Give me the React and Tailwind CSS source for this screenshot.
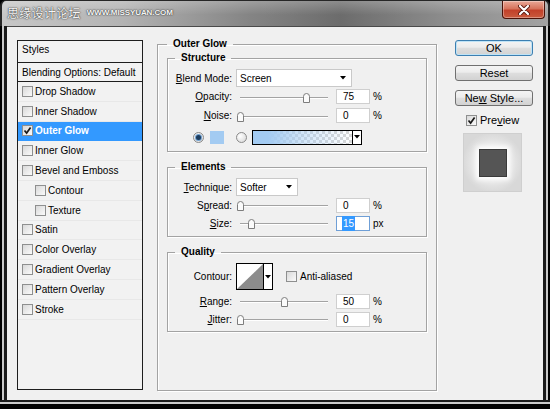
import React from 'react';

const U = ({ children }) => <span className="underline underline-offset-[1px]">{children}</span>;

function Checkbox({ checked }) {
  return (
    <span className="w-[11px] h-[11px] shrink-0 border border-[#8e8f8f] bg-[linear-gradient(135deg,#d9d9d9,#fafafa)] flex items-center justify-center">
      {checked && (
        <svg width="9" height="9" viewBox="0 0 9 9">
          <path d="M1.5 4.5 L3.6 7 L7.6 1.4" fill="none" stroke="#1a1a1a" strokeWidth="1.7" />
        </svg>
      )}
    </span>
  );
}

function Radio({ checked }) {
  return (
    <span className="w-[11px] h-[11px] shrink-0 rounded-full border border-[#8a8a8a] bg-[radial-gradient(circle_at_35%_35%,#ffffff,#d4d4d4)] flex items-center justify-center">
      {checked && <span className="w-[5px] h-[5px] rounded-full bg-[#1c3c5e] shadow-[0_0_0_1px_#6f9fcf]" />}
    </span>
  );
}

function Arrow() {
  return (
    <svg width="6" height="4" viewBox="0 0 6 4">
      <path d="M0 0 H6 L3 3.5 Z" fill="#000" />
    </svg>
  );
}

function Dropdown({ text, className }) {
  return (
    <div className={'ml-[4px] h-[18px] border border-[#c9c9c9] bg-white flex items-center justify-between pl-[3px] pr-[5px] ' + className}>
      <span>{text}</span>
      <Arrow />
    </div>
  );
}

function Label({ children }) {
  return <span className="w-[57px] shrink-0 text-right">{children}</span>;
}

function Slider({ p }) {
  const left = 4 + p * 88 - 3.5;
  return (
    <div className="relative ml-[4px] w-[96px] h-full shrink-0">
      <div className="absolute left-[4px] right-[4px] top-1/2 h-[2px] border-t border-[#a3a3a3] border-b border-b-white" />
      <svg className="absolute top-[calc(50%-4px)]" style={{ left }} width="7" height="10" viewBox="0 0 7 10">
        <path d="M0.5 3.5 A3 3 0 0 1 6.5 3.5 V9.5 H0.5 Z" fill="#fbfbfb" stroke="#7d7d7d" />
      </svg>
    </div>
  );
}

function SliderRow({ label, p, value, unit, selected, className }) {
  return (
    <div className={'flex items-center ' + className}>
      <Label>{label}</Label>
      <Slider p={p} />
      <div
        className={
          'ml-[4px] w-[34px] h-[15px] bg-white flex items-center pl-[5px] border ' +
          (selected ? 'border-[#6f9fd6]' : 'border-[#cfcfcf]')
        }
      >
        {selected ? <span className="bg-[#3399ff] text-white px-[1px]">{value}</span> : <span className="pl-[1px]">{value}</span>}
      </div>
      <span className="ml-[3px]">{unit}</span>
    </div>
  );
}

function Group({ title, className, children }) {
  return (
    <fieldset className={'border border-[#a3a3a3] shadow-[inset_1px_1px_0_#fff,1px_1px_0_#fff] px-[7px] ' + className}>
      <legend className="px-[6px] font-bold leading-[12px]">{title}</legend>
      {children}
    </fieldset>
  );
}

function Button({ children, primary, className }) {
  return (
    <div
      className={
        'h-[16px] rounded-[3px] border bg-[linear-gradient(to_bottom,#f4f4f4,#ececec_45%,#dedede_50%,#d2d2d2)] text-[11px] leading-none flex items-center justify-center ' +
        (primary ? 'border-[#3c7fb1] shadow-[inset_0_0_0_1px_#bfe3f6] ' : 'border-[#707070] ') +
        (className || '')
      }
    >
      <span>{children}</span>
    </div>
  );
}

const items = [
  { name: 'Drop Shadow' },
  { name: 'Inner Shadow' },
  { name: 'Outer Glow', active: true },
  { name: 'Inner Glow' },
  { name: 'Bevel and Emboss' },
  { name: 'Contour', sub: true },
  { name: 'Texture', sub: true },
  { name: 'Satin' },
  { name: 'Color Overlay' },
  { name: 'Gradient Overlay' },
  { name: 'Pattern Overlay' },
  { name: 'Stroke' },
];

function StylesList() {
  return (
    <div className="w-[126px] h-[350px] shrink-0 border border-[#1e1e1e] bg-[#f2f2f2] flex flex-col">
      <div className="h-[22px] border-b border-[#1e1e1e] pl-[4px] pb-[4px] flex items-center">Styles</div>
      <div className="h-[19px] border-b border-[#1e1e1e] pl-[4px] flex items-center">Blending Options: Default</div>
      {items.map((it) => (
        <div
          key={it.name}
          className={
            'h-[19.8px] flex items-center gap-[2px] border-b ' +
            (it.sub ? 'pl-[17px] ' : 'pl-[4px] ') +
            (it.active ? 'bg-[#3399ff] border-[#3399ff] text-white font-bold' : 'border-[#e8e8e8]')
          }
        >
          <Checkbox checked={it.active} />
          <span>{it.name}</span>
        </div>
      ))}
    </div>
  );
}

export default function App() {
  return (
    <div className="w-[550px] h-[409px] flex flex-col bg-black font-['Liberation_Sans',Arial,sans-serif] text-[10px] text-black overflow-hidden select-none">
      {/* title bar */}
      <div className="h-[26px] shrink-0 flex rounded-t-[6px] border-x-2 border-t border-[#262626] bg-[linear-gradient(to_bottom,rgba(255,255,255,0.22),rgba(255,255,255,0)_55%),linear-gradient(to_right,#c7c7c7,#b3b3b3_22%,#858585_45%,#6c6c6c_62%,#8e8e8e_82%,#a3a3a3)]">
        <div className="ml-[5px] mt-[5px] flex items-center h-[14px] text-[#f6f6f6] [text-shadow:0_0_1px_#222,0_0_2px_#444]">
          <span className="text-[12px] tracking-[0.3px] font-['Noto_Sans_CJK_SC',sans-serif]">思缘设计论坛</span>
          <span className="ml-[6px] text-[8px] font-bold tracking-[-0.1px]">WWW.MISSYUAN.COM</span>
        </div>
        <div className="ml-auto mr-[3px] w-[43px] h-[18px] rounded-b-[4px] border border-t-0 border-[#4a1208] bg-[linear-gradient(to_bottom,#e9a897,#d6735c_45%,#c2412a_55%,#c95a3d)] flex items-center justify-center shadow-[inset_0_0_0_1px_rgba(255,255,255,0.35)]">
          <svg width="12" height="10" viewBox="0 0 12 10">
            <path d="M2 1 L10 9 M10 1 L2 9" stroke="#5a1a10" strokeWidth="4" strokeLinecap="round" />
            <path d="M2 1 L10 9 M10 1 L2 9" stroke="#fff" strokeWidth="2.2" strokeLinecap="round" />
          </svg>
        </div>
      </div>

      <div className="flex flex-1 min-h-0">
        <div className="w-[7px] shrink-0 bg-[linear-gradient(to_right,#000_0,#000_2px,#c9c9c9_2px,#c9c9c9_4px,#1a1a1a_4px,#1a1a1a_7px)]" />
        <div className="flex-1 bg-[#f0f0f0] border-t border-[#4a4a4a] pt-[13px] pl-[10px] flex items-start">
          <StylesList />

          {/* main settings */}
          <fieldset className="ml-[14px] -mt-[2px] w-[280px] h-[353px] shrink-0 border border-[#a3a3a3] shadow-[inset_1px_1px_0_#fff,1px_1px_0_#fff] px-[9px]">
            <legend className="px-[6px] font-bold leading-[12px]">Outer Glow</legend>

            <Group title="Structure" className="mt-[2px] pb-[5px]">
              <div className="mt-[5px] h-[18px] flex items-center">
                <Label><U>B</U>lend Mode:</Label>
                <Dropdown text="Screen" className="w-[116px]" />
              </div>
              <SliderRow className="h-[19px]" label={<><U>O</U>pacity:</>} p={0.75} value="75" unit="%" />
              <SliderRow className="h-[19px]" label={<><U>N</U>oise:</>} p={0} value="0" unit="%" />
              <div className="mt-[3px] h-[18px] flex items-center pl-[18px]">
                <Radio checked />
                <span className="ml-[6px] w-[14px] h-[13px] bg-[#a3cbf2]" />
                <span className="ml-[12px]"><Radio /></span>
                <div className="ml-[5px] w-[110px] h-[15px] border border-black shadow-[inset_0_0_0_1px_#333] flex">
                  <div className="flex-1 bg-[repeating-conic-gradient(#d6d6d6_0_25%,#ffffff_0_50%)] bg-[length:6px_6px]">
                    <div className="w-full h-full bg-[linear-gradient(to_right,#a3cbf2_15%,rgba(163,203,242,0.5)_50%,rgba(163,203,242,0)_100%)]" />
                  </div>
                  <div className="w-[9px] border-l border-black bg-white flex items-center justify-center">
                    <Arrow />
                  </div>
                </div>
              </div>
            </Group>

            <Group title="Elements" className="mt-[9px] pb-[4px]">
              <div className="mt-[5px] h-[18px] flex items-center">
                <Label><U>T</U>echnique:</Label>
                <Dropdown text="Softer" className="w-[62px]" />
              </div>
              <SliderRow className="h-[18px]" label={<>S<U>p</U>read:</>} p={0} value="0" unit="%" />
              <SliderRow className="h-[18px]" label={<><U>S</U>ize:</>} p={0.13} value="15" unit="px" selected />
            </Group>

            <Group title="Quality" className="mt-[9px] pb-[3px]">
              <div className="mt-[5px] h-[27px] flex items-center">
                <Label>Contour:</Label>
                <div className="ml-[4px] w-[37px] h-[27px] border border-black bg-white flex">
                  <svg width="26" height="25" viewBox="0 0 26 25">
                    <path d="M0 25 L26 0 V25 Z" fill="#8c8c8c" />
                  </svg>
                  <div className="flex-1 border-l border-black flex items-center justify-center">
                    <Arrow />
                  </div>
                </div>
                <span className="ml-[13px]"><Checkbox /></span>
                <span className="ml-[3px]">Anti-aliased</span>
              </div>
              <SliderRow className="mt-[2px] h-[18px]" label={<><U>R</U>ange:</>} p={0.5} value="50" unit="%" />
              <SliderRow className="h-[18px]" label={<><U>J</U>itter:</>} p={0} value="0" unit="%" />
            </Group>
          </fieldset>

          {/* buttons */}
          <div className="ml-[18px] w-[78px] shrink-0 flex flex-col">
            <Button primary>OK</Button>
            <Button className="mt-[9px]">Reset</Button>
            <Button className="mt-[9px]">Ne<U>w</U> Style...</Button>
            <div className="mt-[9px] h-[11px] pl-[11px] flex items-center">
              <Checkbox checked />
              <span className="ml-[3px] text-[11px]">Pre<U>v</U>iew</span>
            </div>
            <div className="mt-[7px] ml-[8px] w-[59px] h-[59px] border border-[#cfcfcf] bg-[radial-gradient(circle,#f4f4f4_25%,#d8d8d8_75%)] flex items-center justify-center">
              <div className="w-[28px] h-[28px] bg-[#555555] border border-[#3a3a3a] shadow-[0_0_5px_3px_rgba(255,255,255,0.95)]" />
            </div>
          </div>
        </div>
        <div className="w-[7px] shrink-0 bg-[linear-gradient(to_left,#000_0,#000_2px,#c9c9c9_2px,#c9c9c9_4px,#1a1a1a_4px,#1a1a1a_7px)]" />
      </div>
      <div className="h-[9px] shrink-0 bg-[linear-gradient(to_bottom,#1a1a1a_0,#1a1a1a_2px,#c9c9c9_2px,#c9c9c9_4px,#000_4px)]" />
    </div>
  );
}
